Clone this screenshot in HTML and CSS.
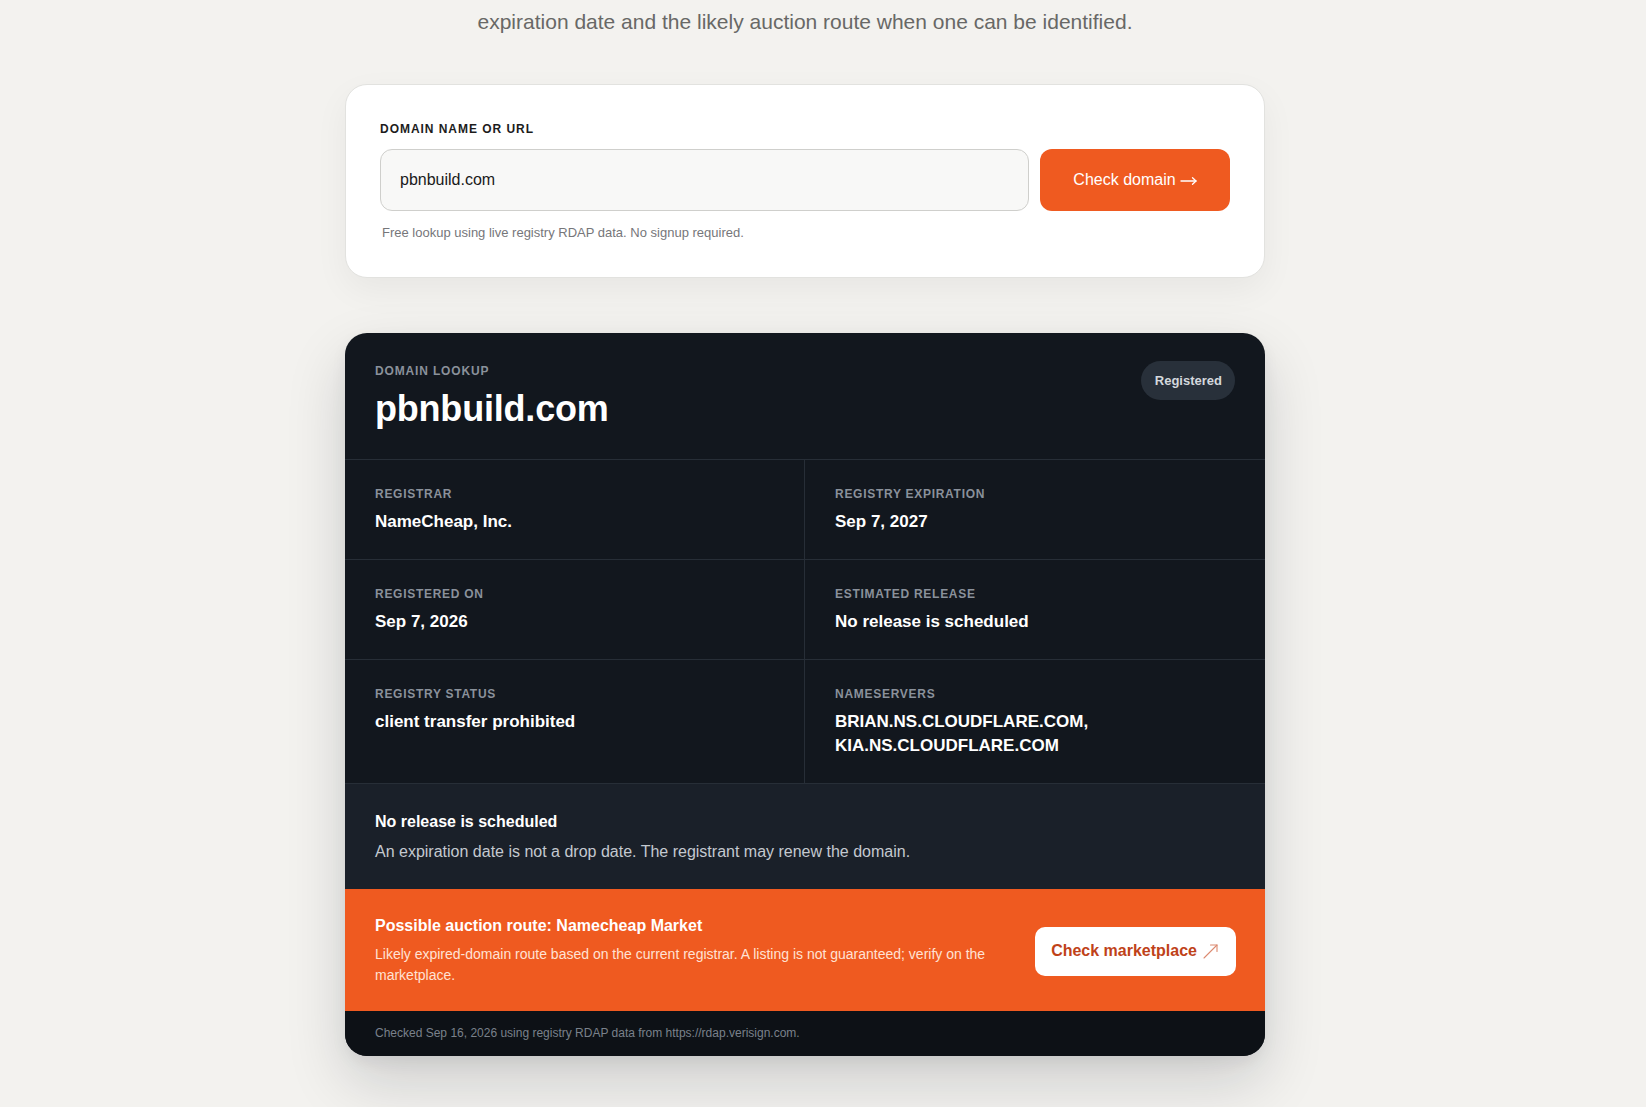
FILE: index.html
```html
<!DOCTYPE html>
<html lang="en">
<head>
<meta charset="utf-8">
<title>Domain lookup</title>
<link rel="stylesheet" href="styles.css">
</head>
<body>
<main class="page">
  <p class="intro">expiration date and the likely auction route when one can be identified.</p>

  <section class="search-card">
    <label class="search-label" for="domain">DOMAIN NAME OR URL</label>
    <div class="search-row">
      <input id="domain" class="search-input" type="text" value="pbnbuild.com">
      <button class="search-btn" type="button">Check domain <svg class="btn-arrow" width="17" height="10" viewBox="0 0 17 10" fill="none" stroke="currentColor" stroke-width="1.3" stroke-linecap="round" stroke-linejoin="round"><path d="M1 5 H16"/><path d="M12.5 1.8 L16 5 L12.5 8.2"/></svg></button>
    </div>
    <p class="search-hint">Free lookup using live registry RDAP data. No signup required.</p>
  </section>

  <section class="result">
    <header class="result-head">
      <div>
        <div class="eyebrow">DOMAIN LOOKUP</div>
        <h1 class="domain">pbnbuild.com</h1>
      </div>
      <span class="pill">Registered</span>
    </header>

    <div class="facts">
      <div class="fact">
        <div class="fact-label">REGISTRAR</div>
        <div class="fact-value">NameCheap, Inc.</div>
      </div>
      <div class="fact">
        <div class="fact-label">REGISTRY EXPIRATION</div>
        <div class="fact-value">Sep 7, 2027</div>
      </div>
      <div class="fact">
        <div class="fact-label">REGISTERED ON</div>
        <div class="fact-value">Sep 7, 2026</div>
      </div>
      <div class="fact">
        <div class="fact-label">ESTIMATED RELEASE</div>
        <div class="fact-value">No release is scheduled</div>
      </div>
      <div class="fact">
        <div class="fact-label">REGISTRY STATUS</div>
        <div class="fact-value">client transfer prohibited</div>
      </div>
      <div class="fact">
        <div class="fact-label">NAMESERVERS</div>
        <div class="fact-value">BRIAN.NS.CLOUDFLARE.COM,<br>KIA.NS.CLOUDFLARE.COM</div>
      </div>
    </div>

    <div class="note">
      <div class="note-title">No release is scheduled</div>
      <p class="note-text">An expiration date is not a drop date. The registrant may renew the domain.</p>
    </div>

    <div class="auction">
      <div class="auction-text">
        <div class="auction-title">Possible auction route: Namecheap Market</div>
        <p class="auction-desc">Likely expired-domain route based on the current registrar. A listing is not guaranteed; verify on the marketplace.</p>
      </div>
      <a class="market-btn" href="#">Check marketplace
        <svg class="market-icon" width="15" height="15" viewBox="0 0 15 15" fill="none" stroke="currentColor" stroke-width="1.1" stroke-linecap="round" stroke-linejoin="round"><path d="M1 14 L14 1"/><path d="M7.5 1 H14 V7.5"/></svg>
      </a>
    </div>

    <footer class="result-foot">Checked Sep 16, 2026 using registry RDAP data from https://rdap.verisign.com.</footer>
  </section>
</main>
</body>
</html>
```

FILE: styles.css
```css
* { box-sizing: border-box; }

html, body {
  margin: 0;
  padding: 0;
}

body {
  background: #f3f2ef;
  font-family: "Liberation Sans", Arial, sans-serif;
  color: #1a1a1a;
  padding-right: 36px;
  height: 1107px;
  overflow: hidden;
}

.page {
  width: 920px;
  margin: 0 auto;
  padding-top: 6px;
}

.intro {
  margin: 0 0 46px;
  text-align: center;
  font-size: 21px;
  line-height: 32px;
  color: #686866;
}

.search-card {
  background: #ffffff;
  border: 1px solid #e2e2df;
  border-radius: 22px;
  padding: 37px 34px 35px;
  box-shadow: 0 12px 34px rgba(20, 20, 20, 0.05);
}

.search-label {
  display: block;
  font-size: 12px;
  line-height: 15px;
  font-weight: 700;
  letter-spacing: 0.08em;
  color: #1c1c1c;
  margin-bottom: 12px;
}

.search-row {
  display: flex;
  gap: 11px;
}

.search-input {
  flex: 1;
  height: 62px;
  border: 1px solid #cfcfcc;
  border-radius: 12px;
  background: #f8f8f7;
  padding: 0 19px;
  font-family: "Liberation Sans", Arial, sans-serif;
  font-size: 16px;
  color: #1a1a1a;
  outline: none;
}

.search-btn {
  width: 190px;
  height: 62px;
  border: 0;
  border-radius: 12px;
  background: #ef5a20;
  color: #ffffff;
  font-family: "Liberation Sans", Arial, sans-serif;
  font-size: 16px;
  cursor: pointer;
  display: flex;
  align-items: center;
  justify-content: center;
  gap: 4px;
}

.btn-arrow {
  margin-top: 1px;
}

.search-hint {
  margin: 13px 0 0;
  padding-left: 2px;
  font-size: 13px;
  line-height: 18px;
  color: #76767a;
}

.result {
  margin-top: 55px;
  background: #12171e;
  border-radius: 22px;
  overflow: hidden;
  color: #ffffff;
  box-shadow: 0 26px 60px rgba(15, 20, 28, 0.16), 0 6px 16px rgba(15, 20, 28, 0.06);
}

.result-head {
  display: flex;
  justify-content: space-between;
  align-items: flex-start;
  padding: 31px 30px 30px;
  border-bottom: 1px solid #272e37;
}

.eyebrow {
  font-size: 12px;
  line-height: 15px;
  font-weight: 700;
  letter-spacing: 0.07em;
  color: #8a919b;
  margin-bottom: 10px;
}

.domain {
  margin: 0;
  font-size: 36px;
  line-height: 40px;
  font-weight: 700;
  letter-spacing: -0.2px;
  color: #ffffff;
}

.pill {
  margin-top: -3px;
  background: #28303a;
  color: #d4d8dd;
  font-size: 13px;
  line-height: 15px;
  font-weight: 700;
  padding: 12px 13px 12px 14px;
  border-radius: 999px;
}

.facts {
  display: grid;
  grid-template-columns: 1fr 1fr;
}

.fact {
  padding: 27px 30px 25px;
  border-bottom: 1px solid #272e37;
}

.fact:nth-child(odd) {
  border-right: 1px solid #272e37;
}

.fact-label {
  font-size: 12px;
  line-height: 15px;
  font-weight: 700;
  letter-spacing: 0.06em;
  color: #8a919b;
  margin-bottom: 8px;
}

.fact-value {
  font-size: 17px;
  line-height: 24px;
  font-weight: 700;
  color: #ffffff;
}

.note {
  background: #1a2029;
  padding: 27px 30px 25px;
}

.note-title {
  font-size: 16px;
  line-height: 22px;
  font-weight: 700;
  color: #ffffff;
  margin-bottom: 7px;
}

.note-text {
  margin: 0;
  font-size: 16px;
  line-height: 24px;
  color: #c4c9d0;
}

.auction {
  background: #ef5a20;
  display: flex;
  align-items: center;
  gap: 32px;
  padding: 27px 29px 25px 30px;
}

.auction-text {
  flex: 1;
}

.auction-title {
  font-size: 16px;
  line-height: 20px;
  font-weight: 700;
  color: #ffffff;
  margin-bottom: 8px;
}

.auction-desc {
  margin: 0;
  font-size: 14px;
  line-height: 21px;
  color: #ffe2d4;
}

.market-btn {
  display: flex;
  align-items: center;
  gap: 6px;
  height: 49px;
  padding: 0 18px 0 16px;
  background: #ffffff;
  border-radius: 10px;
  color: #bf4219;
  font-size: 16px;
  font-weight: 700;
  text-decoration: none;
  white-space: nowrap;
}

.market-icon {
  color: #dc8a70;
}

.result-foot {
  background: #0d1116;
  padding: 14px 30px 14px;
  font-size: 12px;
  line-height: 17px;
  color: #7a818b;
}
```
